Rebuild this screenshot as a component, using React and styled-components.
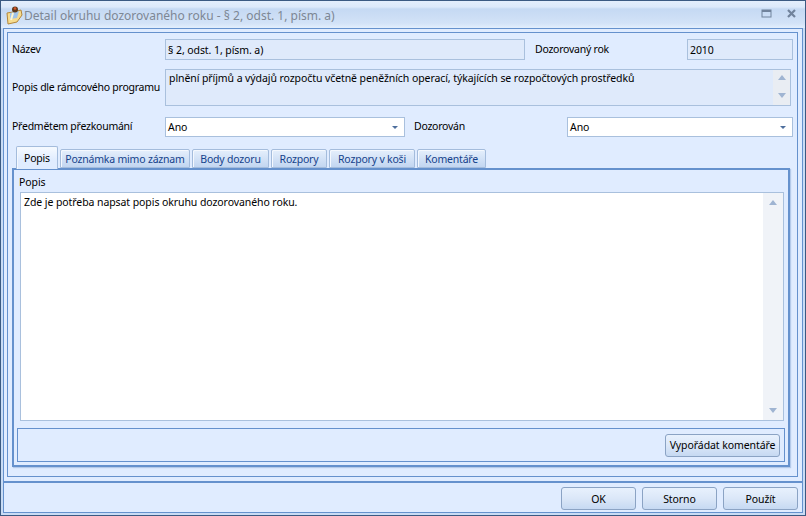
import React from 'react';
import styled, { createGlobalStyle } from 'styled-components';

const Global = createGlobalStyle`
  html, body { margin: 0; padding: 0; background: #c9dcf5; }
  * { box-sizing: border-box; }
`;

const Window = styled.div`
  width: 806px;
  height: 516px;
  display: flex;
  flex-direction: column;
  border: 1px solid #3b5a82;
  background: #c9dcf5;
  padding: 0 2px 2px;
  font-family: "Noto Sans", Tahoma, sans-serif;
  font-size: 10.5px;
  letter-spacing: -0.08px;
  color: #000;
  overflow: hidden;
`;

const TitleBar = styled.div`
  height: 27px;
  margin: 0 -2px;
  padding: 1px 7px 0 4px;
  display: flex;
  align-items: center;
  background: linear-gradient(#e3eefc 0, #dce9fa 6px, #c5d9f3 8px, #d2e2f7 22px, #e2eefd 27px);
`;

const TitleText = styled.span`
  margin-left: -1px;
  flex: 1;
  font-size: 12px;
  letter-spacing: 0;
  color: #7d8794;
  white-space: nowrap;
`;

const CaptionButton = styled.svg`
  width: 12px;
  height: 11px;
  margin-left: ${p => p.$gap}px;
  margin-bottom: 3px;
`;

const Frame = styled.div`
  flex: 1;
  display: flex;
  flex-direction: column;
  min-height: 0;
  border: 1px solid #6591cd;
  background: #e0ecff;
`;

const Panel = styled.div`
  height: 445px;
  margin: 3px 4px 0 3px;
  border: 1px solid #6591cd;
  padding: 6px 6px 8px 4px;
  display: flex;
  flex-direction: column;
`;

const Row = styled.div`
  display: flex;
  align-items: center;
  height: ${p => p.$h}px;
  margin-bottom: ${p => p.$mb || 0}px;
`;

const Label = styled.div`
  width: ${p => p.$w}px;
  padding-left: ${p => p.$pl || 0}px;
  padding-bottom: 2px;
  flex: none;
  white-space: nowrap;
  letter-spacing: -0.25px;
`;

const ReadField = styled.div`
  width: ${p => p.$w}px;
  height: 100%;
  flex: ${p => (p.$w ? 'none' : 1)};
  position: relative;
  border: 1px solid #a9c0dd;
  background: #dfeafb;
  padding: ${p => (p.$area ? '1px 20px 0 3px' : '0 2px')};
  display: flex;
  align-items: ${p => (p.$area ? 'flex-start' : 'center')};
  white-space: nowrap;
`;

const MiniScroll = styled.div`
  position: absolute;
  top: 0;
  right: 0;
  bottom: 0;
  width: 17px;
  background: #e9edf3;
  display: flex;
  flex-direction: column;
  align-items: center;
  justify-content: space-between;
  padding: 5px 0 7px;
`;

const Arrow = styled.span`
  width: 0;
  height: 0;
  border-left: 4.5px solid transparent;
  border-right: 4.5px solid transparent;
  ${p => (p.$down ? 'border-top' : 'border-bottom')}: 5px solid #9fb4d2;
`;

const Select = styled.div`
  width: ${p => p.$w}px;
  height: 100%;
  flex: none;
  border: 1px solid #a9c0dd;
  background: #fff;
  padding: 0 6px 0 2px;
  display: flex;
  align-items: center;
  justify-content: space-between;
`;

const SelectCaret = styled.span`
  width: 0;
  height: 0;
  border-left: 3px solid transparent;
  border-right: 3px solid transparent;
  border-top: 3px solid #4e6f9d;
`;

const TabStrip = styled.div`
  display: flex;
  align-items: flex-end;
  height: 21px;
  margin-top: 10px;
  padding-left: 4px;
  gap: 2px;
  position: relative;
  z-index: 1;
`;

const Tab = styled.div`
  width: ${p => p.$w}px;
  height: ${p => (p.$active ? 23 : 19)}px;
  margin-bottom: ${p => (p.$active ? -1 : 0)}px;
  border: 1px solid #a4bcdc;
  border-bottom: ${p => (p.$active ? 'none' : '1px solid #a4bcdc')};
  border-radius: 2px 2px 0 0;
  background: ${p => (p.$active ? 'linear-gradient(#f6faff, #e0ecff 60%)' : 'linear-gradient(#e5effc, #c2d6f1)')};
  box-shadow: inset 1px 1px 0 #f4f8fe;
  color: ${p => (p.$active ? '#000' : '#15428b')};
  display: flex;
  align-items: center;
  justify-content: center;
  white-space: nowrap;
  letter-spacing: -0.2px;
`;

const TabPage = styled.div`
  width: 778px;
  height: 299px;
  border: 2px solid #6591cd;
  box-shadow: 1px 1px 1px #b4caea;
  padding: 5px 2px 3px;
  display: flex;
  flex-direction: column;
`;

const PageLabel = styled.div`
  height: 17px;
  padding-left: 2px;
  margin-left: 1px;
`;

const Editor = styled.div`
  height: 229px;
  margin: 0 0 0 4px;
  width: 764px;
  border: 1px solid #a9c0dd;
  background: #fff;
  position: relative;
  padding: 2px 3px 0;
`;

const EditorScroll = styled.div`
  position: absolute;
  top: 0;
  right: 0;
  bottom: 0;
  width: 20px;
  background: #f0f3f8;
  display: flex;
  flex-direction: column;
  align-items: center;
  justify-content: space-between;
  padding: 7px 0;
`;

const ActionBar = styled.div`
  height: 34px;
  margin-top: 7px;
  margin-left: 1px;
  width: 768px;
  border: 1px solid #6591cd;
  display: flex;
  align-items: center;
  justify-content: flex-end;
  padding: 0 4px;
`;

const Button = styled.button`
  width: ${p => p.$w}px;
  height: 23px;
  border: 1px solid #8ba3c4;
  border-radius: 3px;
  background: linear-gradient(#e8f1fd, #dbe7f8 50%, #c6d9f2);
  font: inherit;
  letter-spacing: inherit;
  color: #000;
  padding: 0;
`;

const Footer = styled.div`
  margin-top: 4px;
  flex: 1;
  border-top: 2px solid #6591cd;
  display: flex;
  justify-content: flex-end;
  align-items: flex-start;
  gap: 6px;
  padding: 4px 4px 0 0;
`;

const FolderIcon = () => (
  <svg width="20" height="20" viewBox="0 0 20 20">
    <path d="M2 8 L8 7 L16 5 L17 10 L12 17 L3 19 Z" fill="#f7dc8e" stroke="#b3873a" strokeWidth="1" />
    <path d="M5 8 L14 6 L12 13 L5 14 Z" fill="#9fc3e8" />
    <circle cx="10" cy="4.5" r="3" fill="#5e3a1c" />
    <circle cx="10" cy="3.5" r="1.3" fill="#d8562a" />
    <path d="M8 8 L6 15" stroke="#fff6d0" strokeWidth="2" />
  </svg>
);

const tabs = [
  ['Popis', 42],
  ['Poznámka mimo záznam', 130],
  ['Body dozoru', 77],
  ['Rozpory', 56],
  ['Rozpory v koši', 86],
  ['Komentáře', 69],
];

export default function App() {
  return (
    <>
      <Global />
      <Window>
        <TitleBar>
          <FolderIcon />
          <TitleText>Detail okruhu dozorovaného roku - § 2, odst. 1, písm. a)</TitleText>
          <CaptionButton viewBox="0 0 12 11">
            <rect x="1" y="2" width="9" height="7" fill="none" stroke="#71839c" />
            <rect x="1" y="2" width="9" height="2" fill="#71839c" />
          </CaptionButton>
          <CaptionButton $gap={13} viewBox="0 0 12 11">
            <path d="M2 2 L9 9 M9 2 L2 9" stroke="#71839c" strokeWidth="2.2" />
          </CaptionButton>
        </TitleBar>
        <Frame>
          <Panel>
            <Row $h={21} $mb={9}>
              <Label $w={153}>Název</Label>
              <ReadField $w={360}>§ 2, odst. 1, písm. a)</ReadField>
              <Label $w={162} $pl={10}>
                Dozorovaný rok
              </Label>
              <ReadField $w={106}>2010</ReadField>
            </Row>
            <Row $h={37} $mb={11}>
              <Label $w={153}>Popis dle rámcového programu</Label>
              <ReadField $area>
                plnění příjmů a výdajů rozpočtu včetně peněžních operací, týkajících se rozpočtových prostředků
                <MiniScroll>
                  <Arrow />
                  <Arrow $down />
                </MiniScroll>
              </ReadField>
            </Row>
            <Row $h={20}>
              <Label $w={153}>Předmětem přezkoumání</Label>
              <Select $w={240}>
                Ano
                <SelectCaret />
              </Select>
              <Label $w={162} $pl={9}>
                Dozorován
              </Label>
              <Select $w={226}>
                Ano
                <SelectCaret />
              </Select>
            </Row>
            <TabStrip>
              {tabs.map(([name, w], i) => (
                <Tab key={name} $w={w} $active={i === 0}>
                  {name}
                </Tab>
              ))}
            </TabStrip>
            <TabPage>
              <PageLabel>Popis</PageLabel>
              <Editor>
                Zde je potřeba napsat popis okruhu dozorovaného roku.
                <EditorScroll>
                  <Arrow />
                  <Arrow $down />
                </EditorScroll>
              </Editor>
              <ActionBar>
                <Button $w={115}>Vypořádat komentáře</Button>
              </ActionBar>
            </TabPage>
          </Panel>
          <Footer>
            <Button $w={75}>OK</Button>
            <Button $w={75}>Storno</Button>
            <Button $w={75}>Použít</Button>
          </Footer>
        </Frame>
      </Window>
    </>
  );
}
